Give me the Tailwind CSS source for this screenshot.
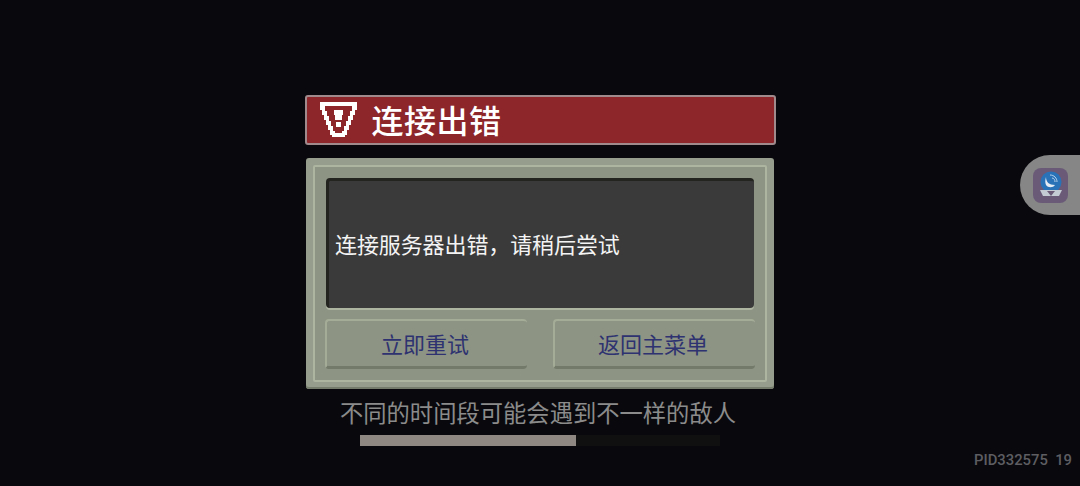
<!DOCTYPE html>
<html lang="zh-CN">
<head>
  <meta charset="UTF-8" />
  <title>连接出错</title>
  <script src="https://cdn.jsdelivr.net/npm/@tailwindcss/browser@4"></script>
</head>
<body class="bg-[#09090d]">
  <div class="relative w-[1080px] h-[486px] overflow-hidden flex flex-col items-center pt-[95px] font-['Noto_Sans_CJK_SC','Noto_Sans',sans-serif]">

    <!-- title bar -->
    <div class="w-[471px] h-[50px] rounded-[3px] border-2 border-[#a08a8c] bg-[#8c262b] flex items-center pl-[13px] pb-[1px] gap-[14px]">
      <svg width="38" height="37" viewBox="0 0 38 37" shape-rendering="crispEdges">
        <path fill-rule="evenodd" fill="#fff" d="M0 1h37v8h-2v5h-2v5h-2v5h-2v5h-2v5h-2v2h-13v-2h-2v-5h-2v-5h-2v-5h-2v-5h-2V9H0zM5 5v5h2v5h2v5h2v5h2v5h2v2h7v-2h2v-5h2v-5h2v-5h2v-5h2V5z"/>
        <path fill="#fff" d="M14 9h9v5h-1v5h-7v-5h-1zM16 21h5v5h-5z"/>
      </svg>
      <span class="text-white text-[32px] leading-none font-medium tracking-[0.5px] -mt-[2px]">连接出错</span>
    </div>

    <!-- dialog panel -->
    <div class="mt-[13px] w-[468px] h-[231px] rounded-[3px] bg-[#969d8c] p-[7px] shadow-[inset_0_-2px_0_#767c6c]">
      <div class="h-[217px] rounded-[2px] border-2 border-[#adb4a0] bg-[#8d9484] px-[11px] pt-[11px] flex flex-col">
        <div class="h-[130px] rounded-[4px] border-t-[3px] border-l-[3px] border-[#232420] bg-[#3a3a3a] flex items-center pl-[6px] pb-[4px] shadow-[0_2px_0_#adb4a0]">
          <span class="text-[#f4f4f4] text-[22px] leading-none tracking-[-0.1px]">连接服务器出错，请稍后尝试</span>
        </div>
        <div class="mt-[11px] flex justify-between -mx-[1px]">
          <button class="w-[202px] h-[50px] rounded-[4px] bg-[#8d9484] border-t-2 border-l-2 border-[#a4ab96] border-b-[3px] border-b-[#747a69] pr-[4px] pb-[2px] text-[#2e3270] text-[22px] leading-none">立即重试</button>
          <button class="w-[202px] h-[50px] rounded-[4px] bg-[#8d9484] border-t-2 border-l-2 border-[#a4ab96] border-b-[3px] border-b-[#747a69] pr-[4px] pb-[2px] text-[#2e3270] text-[22px] leading-none">返回主菜单</button>
        </div>
      </div>
    </div>

    <!-- loading tip -->
    <p class="mt-[9px] pr-[4px] text-[#8b8b8b] text-[23.3px] leading-[28px] whitespace-nowrap">不同的时间段可能会遇到不一样的敌人</p>
    <div class="mt-[9px] w-[360px] h-[11px] bg-[#101011]">
      <div class="h-full bg-[#8f8781]" style="width:60%"></div>
    </div>

    <!-- floating widget -->
    <div class="absolute right-0 top-[155px] w-[60px] h-[60px] rounded-l-[30px] bg-[#868686] flex items-center pl-[13px]">
      <div class="w-[35px] h-[35px] rounded-[8px] bg-[#6a5a78] flex items-center justify-center">
        <svg width="28" height="28" viewBox="0 0 28 28">
          <circle cx="14" cy="11" r="10.5" fill="#2a72b8"/>
          <path d="M3 19h22l-3 6H6z" fill="#c4cbd2"/>
          <path d="M14 25l-4-5h8z" fill="#6a5a78"/>
          <path d="M9 6c0 5 3 8 9 8-2 3-7 3-9 0-1-2-1-5 0-8z" fill="#e4ebf2"/>
          <path d="M13 4c4 0 7 3 7 7M15 7c2 0 3 2 3 4" fill="none" stroke="#b9d3ea" stroke-width="1"/>
        </svg>
      </div>
    </div>

    <!-- build id -->
    <div class="absolute right-[8px] bottom-[18px] text-[#5d5d62] text-[14.8px] leading-none font-medium font-['Roboto',sans-serif] whitespace-pre">PID332575  19</div>
  </div>
</body>
</html>
